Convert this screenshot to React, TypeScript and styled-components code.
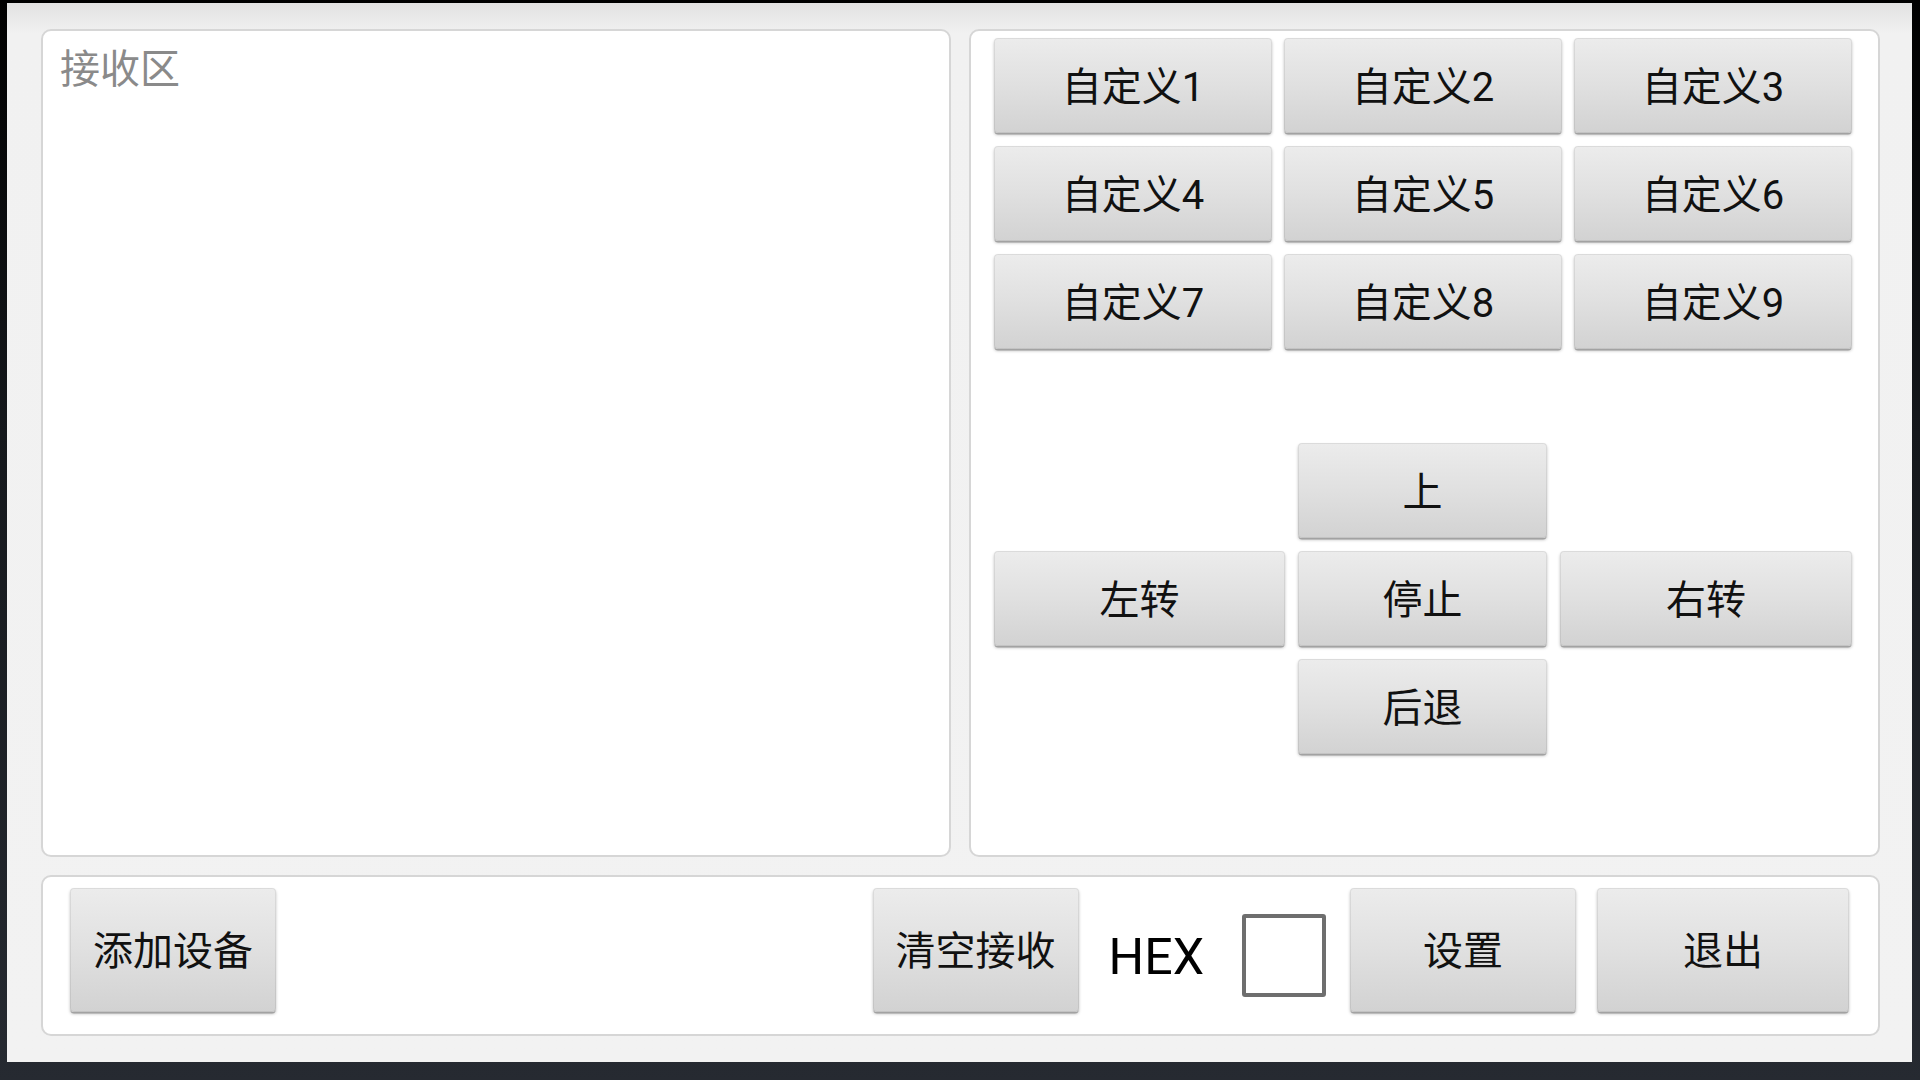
import React from 'react'
import styled, { createGlobalStyle } from 'styled-components'

const GlobalStyle = createGlobalStyle`
  html, body {
    margin: 0;
    padding: 0;
    width: 1920px;
    height: 1080px;
    overflow: hidden;
    background: #262a31;
    font-family: Roboto, "Noto Sans CJK SC", sans-serif;
  }
`

const Screen = styled.div`
  box-sizing: border-box;
  width: 1920px;
  height: 1080px;
  display: flex;
  padding: 3px 8px 18px 7px;
  background: linear-gradient(180deg, #000000 0%, #15181c 40%, #262a31 100%);
`

const Window = styled.div`
  box-sizing: border-box;
  flex: 1;
  display: grid;
  grid-template-columns: 910px 911px;
  grid-template-rows: 828px 161px;
  gap: 18px;
  padding: 26px 32px 26px 34px;
  background: linear-gradient(180deg, #e2e2e2 0px, #f1f1f1 30px, #f2f2f2 100%);
`

const Panel = styled.div`
  box-sizing: border-box;
  background: #ffffff;
  border: 2px solid #d6d6d6;
  border-radius: 10px;
`

const ReceivePanel = styled(Panel)`
  padding: 15px 17px;
`

const ReceiveHint = styled.div`
  font-size: 40px;
  line-height: 48px;
  color: #8a8a8a;
`

const ControlPanel = styled(Panel)`
  display: flex;
  flex-direction: column;
  padding: 7px 0 0 23px;
`

const CustomGrid = styled.div`
  display: grid;
  grid-template-columns: repeat(3, 278px);
  grid-auto-rows: 95px;
  column-gap: 12px;
  row-gap: 13px;
`

const DirPad = styled.div`
  display: grid;
  grid-template-columns: 291px 249px 292px;
  grid-template-rows: repeat(3, 95px);
  column-gap: 13px;
  row-gap: 13px;
  margin-top: 94px;
`

const Button = styled.button<{ $col?: number; $row?: number }>`
  box-sizing: border-box;
  margin: 0;
  padding: 4px 0 0;
  border: none;
  border-radius: 4px;
  background: linear-gradient(180deg, #ececec 0%, #e0e0e0 50%, #d2d2d2 100%);
  box-shadow:
    inset 0 0 0 1px rgba(0, 0, 0, 0.07),
    0 2px 0 -0.5px #a2a2a2,
    0 2px 3px rgba(0, 0, 0, 0.25);
  font-family: Roboto, "Noto Sans CJK SC", sans-serif;
  font-size: 40px;
  line-height: 1;
  color: #111111;
  display: flex;
  align-items: center;
  justify-content: center;
  grid-column: ${(p) => (p.$col ? p.$col : 'auto')};
  grid-row: ${(p) => (p.$row ? p.$row : 'auto')};
`

const BottomBar = styled(Panel)`
  grid-column: 1 / 3;
  display: flex;
  align-items: center;
  padding: 0 29px 0 27px;
`

const BarButton = styled(Button)<{ $w: number; $ml?: number }>`
  flex: none;
  width: ${(p) => p.$w}px;
  height: 124px;
  margin-bottom: 12px;
  margin-left: ${(p) => p.$ml || 0}px;
`

const Spacer = styled.div`
  flex: 1;
`

const HexLabel = styled.span`
  margin-left: 30px;
  padding-top: 3px;
  font-family: Roboto, sans-serif;
  font-size: 50px;
  line-height: 1;
  color: #000000;
`

const CheckBox = styled.div`
  box-sizing: border-box;
  width: 84px;
  height: 83px;
  margin-left: 38px;
  margin-right: 24px;
  border: 4px solid #6e6e6e;
  border-radius: 3px;
  background: #ffffff;
`

const customLabels = Array.from({ length: 9 }, (_, i) => `自定义${i + 1}`)

const App: React.FC = () => {
  return (
    <>
      <GlobalStyle />
      <Screen>
        <Window>
          <ReceivePanel>
            <ReceiveHint>接收区</ReceiveHint>
          </ReceivePanel>
          <ControlPanel>
            <CustomGrid>
              {customLabels.map((label) => (
                <Button key={label}>{label}</Button>
              ))}
            </CustomGrid>
            <DirPad>
              <Button $col={2} $row={1}>上</Button>
              <Button $col={1} $row={2}>左转</Button>
              <Button $col={2} $row={2}>停止</Button>
              <Button $col={3} $row={2}>右转</Button>
              <Button $col={2} $row={3}>后退</Button>
            </DirPad>
          </ControlPanel>
          <BottomBar>
            <BarButton $w={206}>添加设备</BarButton>
            <Spacer />
            <BarButton $w={206}>清空接收</BarButton>
            <HexLabel>HEX</HexLabel>
            <CheckBox />
            <BarButton $w={226}>设置</BarButton>
            <BarButton $w={252} $ml={21}>退出</BarButton>
          </BottomBar>
        </Window>
      </Screen>
    </>
  )
}

export default App
